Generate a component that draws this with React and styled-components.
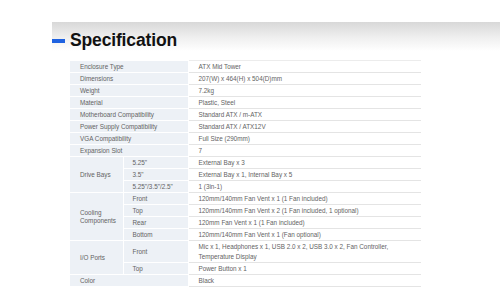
import React from 'react';
import styled, { createGlobalStyle } from 'styled-components';

const GlobalStyle = createGlobalStyle`
  html, body {
    margin: 0;
    padding: 0;
    background: #ffffff;
  }
  body {
    font-family: "Liberation Sans", Arial, sans-serif;
  }
`

const Page = styled.div`
  width: 500px;
  height: 304px;
  overflow: hidden;
  padding-top: 22px;
  box-sizing: border-box;
`

const Heading = styled.div`
  margin-left: 52px;
  height: 34px;
  display: flex;
  align-items: center;
  gap: 5px;
  background: linear-gradient(to bottom, #d8d8d8 0%, #efefef 45%, #ffffff 85%);
`

const BlueBar = styled.span`
  width: 13px;
  height: 4px;
  background: #1f62e0;
  margin-top: 4px;
`

const Title = styled.h1`
  margin: 0;
  font-family: "Liberation Sans", Arial, sans-serif;
  font-weight: bold;
  font-size: 17.5px;
  color: #111111;
  letter-spacing: -0.15px;
  padding-top: 2px;
`

const Table = styled.table`
  margin: 4px 0 0 70px;
  width: 351px;
  border-collapse: collapse;
  table-layout: fixed;
  font-size: 6.35px;
  color: #636363;
  border-top: 1px solid #ececec;
`

const Label = styled.td`
  background: #edf1f6;
  border: 1px solid #ffffff;
  border-left: none;
  padding: 0 0 0 ${p => (p.$sub ? '9px' : '10px')};
  height: ${p => (p.$tall ? '21px' : '11px')};
  vertical-align: middle;
  line-height: 7.8px;
  white-space: nowrap;
`

const Value = styled.td`
  background: #ffffff;
  border-bottom: 1px solid #e4e4e4;
  border-left: 1px solid #f2f2f2;
  padding: 0 0 0 10px;
  height: ${p => (p.$tall ? '21px' : '11px')};
  vertical-align: middle;
  line-height: 9.5px;
`

const specs = [
  { label: 'Enclosure Type', value: 'ATX Mid Tower' },
  { label: 'Dimensions', value: '207(W) x 464(H) x 504(D)mm' },
  { label: 'Weight', value: '7.2kg' },
  { label: 'Material', value: 'Plastic, Steel' },
  { label: 'Motherboard Compatibility', value: 'Standard ATX / m-ATX' },
  { label: 'Power Supply Compatibility', value: 'Standard ATX / ATX12V' },
  { label: 'VGA Compatibility', value: 'Full Size (290mm)' },
  { label: 'Expansion Slot', value: '7' },
  {
    group: 'Drive Bays',
    items: [
      { label: '5.25"', value: 'External Bay x 3' },
      { label: '3.5"', value: 'External Bay x 1, Internal Bay x 5' },
      { label: '5.25"/3.5"/2.5"', value: '1 (3in-1)' },
    ],
  },
  {
    group: ['Cooling', 'Components'],
    items: [
      { label: 'Front', value: '120mm/140mm Fan Vent x 1 (1 Fan included)' },
      { label: 'Top', value: '120mm/140mm Fan Vent x 2 (1 Fan included, 1 optional)' },
      { label: 'Rear', value: '120mm Fan Vent x 1 (1 Fan included)' },
      { label: 'Bottom', value: '120mm/140mm Fan Vent x 1 (Fan optional)' },
    ],
  },
  {
    group: 'I/O Ports',
    items: [
      {
        label: 'Front',
        value: ['Mic x 1, Headphones x 1, USB 2.0 x 2, USB 3.0 x 2, Fan Controller,', 'Temperature Display'],
        tall: true,
      },
      { label: 'Top', value: 'Power Button x 1' },
    ],
  },
  { label: 'Color', value: 'Black' },
]

function lines(text) {
  if (!Array.isArray(text)) return text
  return text.map((t, i) => (
    <React.Fragment key={i}>
      {i > 0 && <br />}
      {t}
    </React.Fragment>
  ))
}

function App() {
  const rows = []
  specs.forEach((spec, i) => {
    if (spec.items) {
      spec.items.forEach((item, j) => {
        rows.push(
          <tr key={`${i}-${j}`}>
            {j === 0 && <Label rowSpan={spec.items.length}>{lines(spec.group)}</Label>}
            <Label $sub $tall={item.tall}>{item.label}</Label>
            <Value $tall={item.tall}>{lines(item.value)}</Value>
          </tr>
        )
      })
    } else {
      rows.push(
        <tr key={i}>
          <Label colSpan={2}>{spec.label}</Label>
          <Value>{spec.value}</Value>
        </tr>
      )
    }
  })

  return (
    <>
      <GlobalStyle />
      <Page>
        <Heading>
          <BlueBar />
          <Title>Specification</Title>
        </Heading>
        <Table>
          <colgroup>
            <col style={{ width: '53px' }} />
            <col style={{ width: '65px' }} />
            <col />
          </colgroup>
          <tbody>{rows}</tbody>
        </Table>
      </Page>
    </>
  )
}

export default App
